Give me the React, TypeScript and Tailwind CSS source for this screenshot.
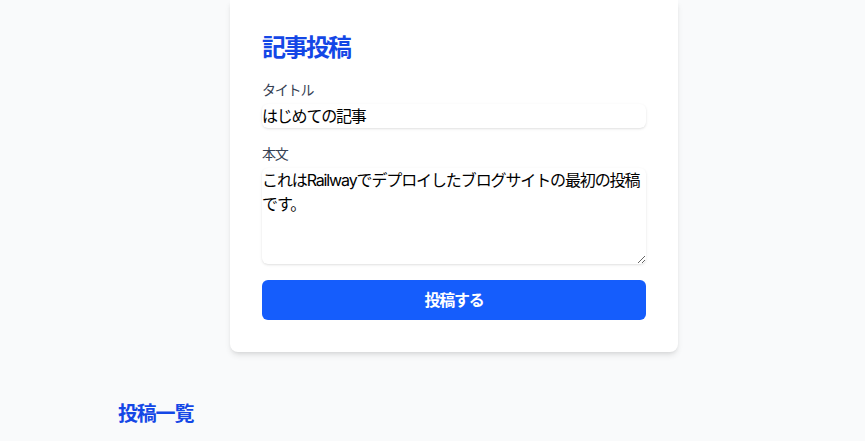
import React from "react";

export default function App() {
  return (
    <div className="min-h-screen bg-gray-50 font-['Inter','Noto_Sans_CJK_JP',sans-serif] tracking-[-0.075em] text-gray-900">
      <div className="ml-[118px] w-[672px] pb-10">
        <div className="mx-auto max-w-md rounded-b-lg bg-white p-8 shadow-md">
          <h1 className="mb-4 text-2xl font-bold tracking-[-0.085em] text-blue-700">記事投稿</h1>
          <form className="space-y-4" onSubmit={(e) => e.preventDefault()}>
            <div>
              <label className="mb-1 block text-sm font-normal text-gray-700">タイトル</label>
              <input
                type="text"
                defaultValue="はじめての記事"
                className="block h-6 w-full rounded-md bg-white text-base leading-6 text-black shadow-sm outline-none"
              />
            </div>
            <div>
              <label className="mb-1 block text-sm font-normal text-gray-700">本文</label>
              <textarea
                rows={4}
                defaultValue="これはRailwayでデプロイしたブログサイトの最初の投稿です。"
                className="block h-24 w-full rounded-md bg-white text-base leading-6 tracking-[-0.07em] text-black shadow-sm outline-none"
              />
            </div>
            <button
              type="submit"
              className="block w-full rounded-md bg-blue-600 py-2 text-base font-bold leading-6 text-white"
            >
              投稿する
            </button>
          </form>
        </div>
        <h2 className="mt-12 text-xl font-bold text-blue-700">投稿一覧</h2>
      </div>
    </div>
  );
}
